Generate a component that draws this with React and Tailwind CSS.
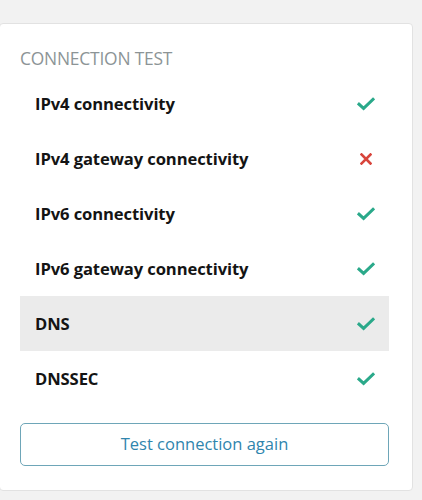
import React from "react";

const rows = [
  { label: "IPv4 connectivity", ok: true },
  { label: "IPv4 gateway connectivity", ok: false },
  { label: "IPv6 connectivity", ok: true },
  { label: "IPv6 gateway connectivity", ok: true },
  { label: "DNS", ok: true, active: true },
  { label: "DNSSEC", ok: true },
];

function Check() {
  return (
    <svg width="18" height="14" viewBox="0 0 18 14" fill="none">
      <path d="M2 7.2 L6.6 11.4 L16 2.4" stroke="#2aa98a" strokeWidth="3" strokeLinecap="square" strokeLinejoin="miter" />
    </svg>
  );
}

function Cross() {
  return (
    <svg width="12" height="12" viewBox="0 0 12 12" fill="none">
      <path d="M1.5 1.5 L10.5 10.5 M10.5 1.5 L1.5 10.5" stroke="#d8453c" strokeWidth="2.6" strokeLinecap="square" />
    </svg>
  );
}

export default function App() {
  return (
    <div className="w-[422px] h-[500px] bg-[#f2f2f2] pt-[23px] overflow-hidden" style={{ fontFamily: "'Open Sans', 'Noto Sans', sans-serif" }}>
      <div className="w-[414px] -ml-px bg-white border border-[#e2e2e2] rounded-[4px] pt-[22px] pb-[24px] pl-[20px] pr-[23px]">
        <div className="text-[17.4px] leading-[24px] text-[#8c9496] tracking-[-0.2px]">CONNECTION TEST</div>
        <div className="mt-[6px] flex flex-col">
          {rows.map((r) => (
            <div
              key={r.label}
              className={`h-[55px] flex items-center justify-between pl-[15px] pr-[14px] ${r.active ? "bg-[#ebebeb]" : ""}`}
            >
              <span className="text-[16.6px] font-bold text-[#141414] tracking-[-0.1px] translate-y-[1px]">{r.label}</span>
              <span className="w-[18px] flex items-center justify-center">{r.ok ? <Check /> : <Cross />}</span>
            </div>
          ))}
        </div>
        <button className="mt-[17px] w-full h-[43px] border border-[#6ea6b8] rounded-[5px] text-[16.5px] text-[#2f85ad] bg-white">
          Test connection again
        </button>
      </div>
    </div>
  );
}
